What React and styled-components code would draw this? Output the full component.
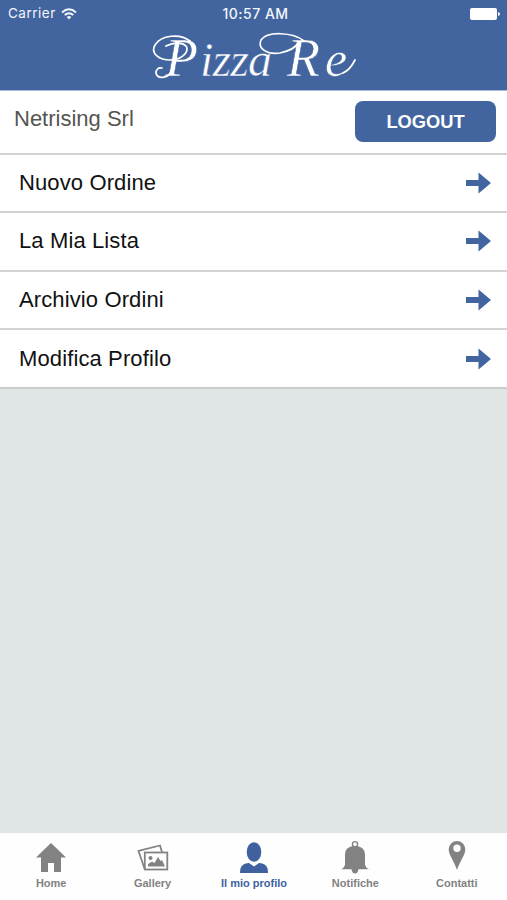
import React from 'react';
import styled, { createGlobalStyle } from 'styled-components';

const GlobalStyle = createGlobalStyle`
  body {
    margin: 0;
    font-family: "Liberation Sans", Arial, sans-serif;
    font-variant-ligatures: none;
  }
`

const Screen = styled.div`
  display: flex;
  flex-direction: column;
  height: 900px;
  overflow: hidden;
  background-color: #e0e5e6;
`

const Header = styled.header`
  display: flex;
  flex-direction: column;
  height: 90px;
  background-color: #42659f;
  border-bottom: 1px solid #a9b7d5;
`

const StatusBar = styled.div`
  display: grid;
  grid-template-columns: 1fr auto 1fr;
  align-items: center;
  height: 27px;
  padding: 0 7px 0 8px;
  color: #f3f6fc;
  font-family: Inter, sans-serif;
  font-size: 13.5px;
  line-height: 27px;
`

const Carrier = styled.div`
  display: flex;
  align-items: center;
  gap: 5.5px;
  letter-spacing: 0.5px;
`

const Clock = styled.span`
  padding-left: 3px;
  font-size: 14px;
  font-weight: 500;
  letter-spacing: 0.5px;
`

const Battery = styled.svg`
  justify-self: end;
`

const Logo = styled.svg`
  display: block;
  margin: 0 auto;
  color: #fff;
  font-family: "Liberation Serif", serif;
  font-style: italic;
`

const Account = styled.div`
  display: flex;
  justify-content: space-between;
  height: 61.5px;
  padding: 10px 11px 0 14px;
  box-sizing: border-box;
  background-color: #fff;
`

const AccountName = styled.span`
  color: #555551;
  font-size: 22px;
  line-height: 36px;
`

const LogoutButton = styled.button`
  width: 141px;
  height: 41px;
  padding: 0;
  border: none;
  border-radius: 8px;
  background-color: #42659f;
  color: #fff;
  font-family: inherit;
  font-size: 18.3px;
  font-weight: bold;
`

const Menu = styled.nav`
  display: flex;
  flex-direction: column;
  border-bottom: 2px solid #cbcdcd;
`

const MenuRow = styled.div`
  display: flex;
  justify-content: space-between;
  align-items: center;
  height: 58.6px;
  padding: 0 16px 0 19px;
  box-sizing: border-box;
  border-top: 2px solid #d2d2d2;
  background-color: #fff;
  color: #111;
  font-size: 22px;
  letter-spacing: 0.12px;
`

const TabBar = styled.footer`
  display: grid;
  grid-template-columns: repeat(5, 1fr);
  height: 67px;
  margin-top: auto;
  background-color: #fefefe;
`

const Tab = styled.div`
  display: flex;
  flex-direction: column;
  align-items: center;
  padding: 7px 0 0 1px;
  color: ${props => props.$active ? '#3f629f' : '#828282'};
  font-size: 11px;
  font-weight: bold;
  line-height: 13px;

  svg {
    margin-bottom: 1px;
  }
`

const WifiIcon = () => (
  <svg width="16" height="12" viewBox="0 0 16 12" fill="none" stroke="currentColor" strokeWidth="2">
    <path d="M1 4.4Q8-1.8 15 4.4M3.7 7.1Q8 3.3 12.3 7.1" />
    <path d="M5.7 9Q8 7.2 10.3 9L8 11.4Z" fill="currentColor" stroke="none" />
  </svg>
)

const BatteryIcon = () => (
  <Battery width="30" height="12" viewBox="0 0 30 12" fill="#fff">
    <rect width="27" height="12" rx="2" />
    <path d="M28 4Q30 4.5 30 6T28 8Z" />
  </Battery>
)

const ArrowIcon = () => (
  <svg width="25" height="22" viewBox="0 0 25 22" fill="#42659f">
    <path d="M0 8H12.5V0.5L25 11L12.5 21.5V14H0Z" />
  </svg>
)

const HomeIcon = () => (
  <svg width="30" height="36" viewBox="0 0 30 36" fill="currentColor">
    <path d="M15 3L30 17.5H25V32H18V23H12V32H5V17.5H0Z" />
  </svg>
)

const GalleryIcon = () => (
  <svg width="32" height="36" viewBox="0 0 32 36" fill="none" stroke="currentColor" strokeWidth="1.8">
    <path d="M7.6 28.8L1.5 11L23 5.5L25 12" />
    <rect x="7.8" y="12.5" width="22.5" height="17" />
    <circle cx="13.5" cy="18" r="2" fill="currentColor" stroke="none" />
    <path d="M11 26.5V24L15 21.5L17.5 23L21 17L23.5 21L25 20L28 26.5Z" fill="currentColor" stroke="none" />
  </svg>
)

const ProfileIcon = () => (
  <svg width="30" height="36" viewBox="0 0 30 36" fill="currentColor">
    <ellipse cx="15" cy="12" rx="7.3" ry="9.8" />
    <path d="M1 33C1 25.5 4 23.7 10 23L15 26.5L20 23C26 23.7 29 25.5 29 33Z" />
  </svg>
)

const BellIcon = () => (
  <svg width="30" height="36" viewBox="0 0 30 36" fill="currentColor">
    <circle cx="15" cy="4.2" r="2.6" fill="none" stroke="currentColor" strokeWidth="1.4" />
    <path d="M5 15C5 8.5 9.5 6 15 6S25 8.5 25 15V25Q26 28 29 29.3H1Q4 28 5 25Z" />
    <path d="M11.5 29H18.5Q18 33.5 15 33.5T11.5 29Z" />
  </svg>
)

const PinIcon = () => (
  <svg width="18" height="36" viewBox="0 0 18 36" fill="currentColor" fillRule="evenodd">
    <path d="M9 1A8.3 8.3 0 0 1 17.3 9.3C17.3 15 12 21 9 30C6 21 0.7 15 0.7 9.3A8.3 8.3 0 0 1 9 1ZM9 4.6A3.7 3.7 0 1 0 9 12A3.7 3.7 0 1 0 9 4.6Z" />
  </svg>
)

const PizzaReLogo = () => (
  <Logo width="204" height="62" viewBox="152 27 204 62" fill="currentColor">
    <g stroke="#42659f" strokeWidth="0.5">
      <text x="165" y="76" fontSize="54">P</text>
      <text x="200" y="76" fontSize="48" textLength="72">izza</text>
      <text x="287" y="76" fontSize="54">R</text>
      <text x="325" y="76" fontSize="50">e</text>
    </g>
    {/* flourishes around the capitals */}
    <g fill="none" stroke="currentColor" strokeWidth="1.7" strokeLinecap="round">
      <path d="M190 41C180 33 161 35 155 45C150 54 160 60 170 60C180 60 187 54 187 49C187 43 176 41 166 46" />
      <path d="M171 72C167 79 157 79 156 73C156 70 158 67 162 68" />
      <path d="M304 41C293 32 267 31 261 40C257 49 268 55 280 53C289 51 296 47 298 43" />
      <path d="M343 73Q350 70 355 60" />
    </g>
  </Logo>
)

const menuItems = ['Nuovo Ordine', 'La Mia Lista', 'Archivio Ordini', 'Modifica Profilo']

const tabs = [
  { label: 'Home', Icon: HomeIcon },
  { label: 'Gallery', Icon: GalleryIcon },
  { label: 'Il mio profilo', Icon: ProfileIcon, active: true },
  { label: 'Notifiche', Icon: BellIcon },
  { label: 'Contatti', Icon: PinIcon },
]

const App = () => {
  return (
    <Screen>
      <GlobalStyle />
      <Header>
        <StatusBar>
          <Carrier>Carrier <WifiIcon /></Carrier>
          <Clock>10:57 AM</Clock>
          <BatteryIcon />
        </StatusBar>
        <PizzaReLogo />
      </Header>
      <Account>
        <AccountName>Netrising Srl</AccountName>
        <LogoutButton>LOGOUT</LogoutButton>
      </Account>
      <Menu>
        {menuItems.map(item => (
          <MenuRow key={item}>
            {item}
            <ArrowIcon />
          </MenuRow>
        ))}
      </Menu>
      <TabBar>
        {tabs.map(({ label, Icon, active }) => (
          <Tab key={label} $active={active}>
            <Icon />
            {label}
          </Tab>
        ))}
      </TabBar>
    </Screen>
  );
};

export default App;
